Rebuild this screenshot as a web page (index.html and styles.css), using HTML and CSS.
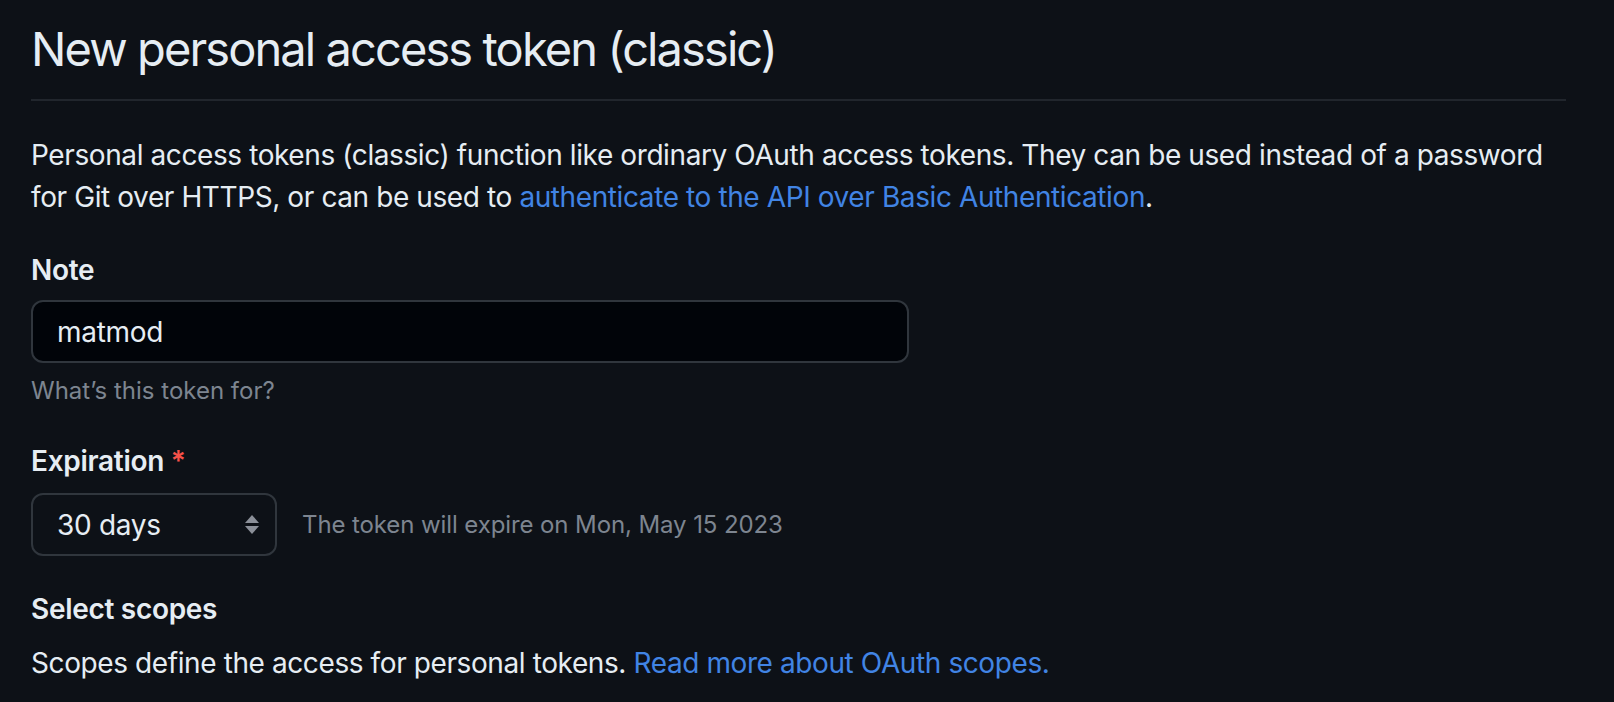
FILE: index.html
```html
<!DOCTYPE html>
<html lang="en">
<head>
<meta charset="utf-8">
<title>New personal access token (classic)</title>
<link rel="stylesheet" href="styles.css">
</head>
<body>
<main class="page">
  <div class="subhead">
    <h2 class="subhead-title">New personal access token (classic)</h2>
  </div>
  <p class="intro">Personal access tokens (classic) function like ordinary OAuth access tokens. They can be used instead of a password<br>for Git over HTTPS, or can be used to <a class="link" href="#">authenticate to the API over Basic Authentication</a>.</p>

  <div class="form-group">
    <label class="label" for="note">Note</label>
    <input class="input note-input" id="note" type="text" value="matmod">
    <p class="hint">What’s this token for?</p>
  </div>

  <div class="form-group">
    <label class="label" for="exp">Expiration <span class="required">*</span></label>
    <div class="exp-row">
      <div class="select" id="exp">
        <span class="select-value">30 days</span>
        <svg class="select-arrows" width="14" height="19" viewBox="0 0 14 19" aria-hidden="true">
          <path d="M7 0 L14 8 L0 8 Z" fill="#8b9099"/>
          <path d="M7 19 L14 11 L0 11 Z" fill="#8b9099"/>
        </svg>
      </div>
      <span class="exp-note">The token will expire on Mon, May 15 2023</span>
    </div>
  </div>

  <div class="scopes">
    <h3 class="label">Select scopes</h3>
    <p class="scopes-text">Scopes define the access for personal tokens. <a class="link" href="#">Read more about OAuth scopes.</a></p>
  </div>
</main>
</body>
</html>
```
FILE: styles.css
```css
html, body {
  margin: 0;
  padding: 0;
  background: #0d1117;
}
body {
  font-family: Inter, "Noto Sans", "Liberation Sans", sans-serif;
  color: #e6edf3;
  font-size: 28px;
  line-height: 42px;
}
.page {
  width: 1535px;
  padding: 0 0 0 31px;
}
.subhead {
  border-bottom: 2px solid #21262d;
  padding-top: 17px;
  padding-bottom: 18px;
}
.subhead-title {
  margin: 0;
  font-size: 47px;
  font-weight: 400;
  line-height: 64px;
  letter-spacing: -1.9px;
}
.intro {
  margin: 33px 0 0;
  letter-spacing: -0.4px;
}
.link {
  color: #4184e4;
  text-decoration: none;
}
.form-group {
  margin-top: 31px;
}
.label {
  display: block;
  margin: 0;
  font-size: 28px;
  font-weight: 600;
  line-height: 42px;
  letter-spacing: -0.3px;
}
.required {
  color: #f85149;
}
.note-input {
  display: block;
  box-sizing: border-box;
  width: 878px;
  height: 63px;
  margin-top: 9px;
  padding: 0 24px;
  background: #010409;
  border: 2px solid #30363d;
  border-radius: 12px;
  color: #e6edf3;
  font: inherit;
  letter-spacing: -0.3px;
  outline: none;
}
.hint {
  margin: 10px 0 0;
  font-size: 24px;
  line-height: 36px;
  color: #7d8590;
  letter-spacing: 0;
}
.exp-row {
  display: flex;
  align-items: center;
  gap: 25px;
  margin-top: 11px;
}
.select {
  box-sizing: border-box;
  width: 246px;
  height: 63px;
  display: flex;
  align-items: center;
  justify-content: space-between;
  padding: 0 16px 0 24px;
  border: 2px solid #30363d;
  border-radius: 12px;
  background: #0d1117;
  letter-spacing: -0.3px;
}
.select-arrows {
  display: block;
}
.exp-note {
  color: #7d8590;
  font-size: 24px;
  letter-spacing: -0.1px;
}
.scopes {
  margin-top: 32px;
}
.scopes-text {
  margin: 12px 0 0;
  letter-spacing: -0.4px;
}
```
